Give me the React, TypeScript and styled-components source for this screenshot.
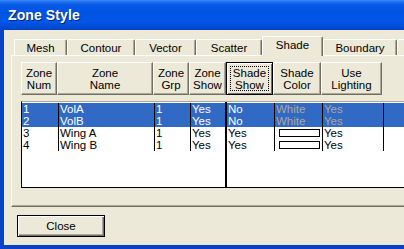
import React from "react";
import styled, { createGlobalStyle, css } from "styled-components";

const Global = createGlobalStyle`
  html, body { margin: 0; padding: 0; background: #fff; }
  body { font-family: "Liberation Sans", Arial, sans-serif; }
`;

const Frame = styled.div`
  width: 404px;
  height: 249px;
  overflow: hidden;
  background: #0842c6;
  display: flex;
  flex-direction: column;
`;

const TitleBar = styled.div`
  height: 30px;
  flex: none;
  display: flex;
  align-items: center;
  padding-left: 8px;
  background: linear-gradient(
    to bottom,
    #3d8cf7 0px,
    #1a6ff0 2px,
    #0858e6 5px,
    #0054e3 12px,
    #0057e8 22px,
    #0048cf 28px,
    #0040c0 30px
  );
  color: #fff;
  font: bold 14px "Liberation Sans", Arial, sans-serif;
  text-shadow: 1px 1px 0 #0a246a;
  letter-spacing: 0.1px;
`;

const Body = styled.div`
  flex: 1;
  margin: 0 0 4px 4px;
  background: #ece9d8;
  display: flex;
  flex-direction: column;
  padding: 6px 0 0 7px;
  font-size: 11px;
  color: #000;
`;

const TabStrip = styled.div`
  display: flex;
  align-items: flex-end;
  height: 19px;
  padding-left: 3px;
  position: relative;
  z-index: 1;
`;

const Tab = styled.div<{ $w: number; $active?: boolean }>`
  width: ${(p) => p.$w}px;
  flex: none;
  height: 16px;
  box-sizing: border-box;
  display: flex;
  align-items: center;
  justify-content: center;
  border-top: 1px solid #fff;
  border-left: 1px solid #fff;
  border-right: 1px solid #716f64;
  box-shadow: inset -1px 0 0 #aca899;
  border-radius: 2px 2px 0 0;
  background: #ece9d8;
  font-size: 11.5px;
  padding-top: 1px;
  ${(p) =>
    p.$active &&
    css`
      height: 20px;
      margin-bottom: -1px;
      padding-bottom: 4px;
    `}
`;

const Panel = styled.div`
  height: 152px;
  box-sizing: border-box;
  border-top: 1px solid #fff;
  border-left: 1px solid #fff;
  border-bottom: 1px solid #716f64;
  box-shadow: inset 0 -1px 0 #aca899;
  padding: 6px 0 0 9px;
  display: flex;
  flex-direction: column;
`;

const cols = "36px 96px 36px 37px 47px 48px 61px";

const HeaderRow = styled.div`
  display: grid;
  grid-template-columns: ${cols};
  height: 33px;
`;

const HeadButton = styled.div<{ $focused?: boolean }>`
  box-sizing: border-box;
  border-top: 1px solid #fff;
  border-left: 1px solid #fff;
  border-right: 1px solid #716f64;
  border-bottom: 1px solid #716f64;
  box-shadow: inset -1px -1px 0 #aca899;
  display: flex;
  align-items: center;
  justify-content: center;
  text-align: center;
  line-height: 12px;
  font-size: 11.5px;
  position: relative;
  ${(p) =>
    p.$focused &&
    css`
      border: 1px solid #000;
      box-shadow: inset 1px 1px 0 #fff, inset -1px -1px 0 #716f64;
      &::after {
        content: "";
        position: absolute;
        inset: 3px;
        border: 1px dotted #000;
      }
    `}
`;

const List = styled.div`
  margin-top: 6px;
  height: 87px;
  box-sizing: border-box;
  background: #fff;
  border-top: 1px solid #aca899;
  border-left: 1px solid #000;
  border-bottom: 1px solid #000;
  padding-top: 1px;
  position: relative;
`;

const FocusLine = styled.div`
  position: absolute;
  left: 203px;
  top: 0;
  bottom: 0;
  width: 2px;
  background: #000;
`;

const Row = styled.div<{ $sel?: boolean }>`
  display: grid;
  grid-template-columns: ${cols} 1fr;
  height: 12px;
  line-height: 12px;
  background: ${(p) => (p.$sel ? "#316ac5" : "transparent")};
  color: ${(p) => (p.$sel ? "#fff" : "#000")};
`;

const Cell = styled.div<{ $sep?: boolean; $dim?: boolean }>`
  box-sizing: border-box;
  padding-left: 1px;
  white-space: nowrap;
  overflow: hidden;
  font-size: 11.5px;
  border-left: ${(p) => (p.$sep ? "1px solid #000" : "none")};
  color: ${(p) => (p.$dim ? "#aca899" : "inherit")};
  display: flex;
  align-items: center;
`;

const Swatch = styled.div`
  width: 41px;
  height: 8px;
  box-sizing: border-box;
  border: 1px solid #000;
  background: #fff;
  margin-left: 3px;
`;

const Footer = styled.div`
  padding: 8px 0 0 6px;
`;

const CloseButton = styled.div`
  width: 88px;
  height: 22px;
  box-sizing: border-box;
  border: 1px solid #000;
  box-shadow: inset 1px 1px 0 #fff, inset -1px -1px 0 #716f64, inset -2px -2px 0 #aca899;
  display: flex;
  align-items: center;
  justify-content: center;
  font-size: 11.5px;
`;

const tabs: [string, number][] = [
  ["Mesh", 53],
  ["Contour", 68],
  ["Vector", 61],
  ["Scatter", 66],
  ["Shade", 61],
  ["Boundary", 74],
  ["", 20],
];

const headers = [
  ["Zone", "Num"],
  ["Zone", "Name"],
  ["Zone", "Grp"],
  ["Zone", "Show"],
  ["Shade", "Show"],
  ["Shade", "Color"],
  ["Use", "Lighting"],
];

type R = { num: string; name: string; sel: boolean; show: string };
const rows: R[] = [
  { num: "1", name: "VolA", sel: true, show: "No" },
  { num: "2", name: "VolB", sel: true, show: "No" },
  { num: "3", name: "Wing A", sel: false, show: "Yes" },
  { num: "4", name: "Wing B", sel: false, show: "Yes" },
];

export default function App() {
  return (
    <>
      <Global />
      <Frame>
        <TitleBar>Zone Style</TitleBar>
        <Body>
          <TabStrip>
            {tabs.map(([t, w], i) => (
              <Tab key={i} $w={w} $active={t === "Shade"}>
                {t}
              </Tab>
            ))}
          </TabStrip>
          <Panel>
            <HeaderRow>
              {headers.map(([a, b], i) => (
                <HeadButton key={i} $focused={i === 4}>
                  {a}
                  <br />
                  {b}
                </HeadButton>
              ))}
            </HeaderRow>
            <List>
              {rows.map((r) => (
                <Row key={r.num} $sel={r.sel}>
                  <Cell>{r.num}</Cell>
                  <Cell $sep>{r.name}</Cell>
                  <Cell $sep>1</Cell>
                  <Cell $sep>Yes</Cell>
                  <Cell>{r.show}</Cell>
                  <Cell $sep $dim={r.sel}>
                    {r.sel ? "White" : <Swatch />}
                  </Cell>
                  <Cell $sep $dim={r.sel}>
                    Yes
                  </Cell>
                  <Cell $sep />
                </Row>
              ))}
              <FocusLine />
            </List>
          </Panel>
          <Footer>
            <CloseButton>Close</CloseButton>
          </Footer>
        </Body>
      </Frame>
    </>
  );
}
